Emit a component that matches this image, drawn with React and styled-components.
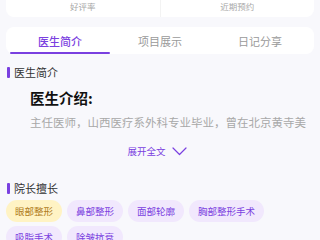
import React from 'react';
import styled, { createGlobalStyle } from 'styled-components';

const GlobalStyle = createGlobalStyle`
  html, body {
    margin: 0;
    padding: 0;
    background: #f8f8fc;
    font-family: "Noto Sans CJK SC", "Noto Sans", sans-serif;
  }
`;

const Page = styled.div`
  width: 320px;
  height: 240px;
  overflow: hidden;
  padding: 0 6px;
  box-sizing: border-box;
  background: #f8f8fc;
`;

const StatsCard = styled.div`
  display: flex;
  height: 17px;
  background: #fff;
  border-radius: 0 0 8px 8px;
`;

const StatItem = styled.div`
  flex: 1;
  display: flex;
  justify-content: center;
  align-items: flex-start;
  padding-top: 1px;
  font-size: 8.5px;
  line-height: 10px;
  color: #a8a8a8;
  & + & {
    border-left: 1px solid #f3f3f3;
  }
`;

const TabsCard = styled.div`
  display: flex;
  height: 27px;
  margin-top: 10px;
  padding: 0 4px;
  background: #fff;
  border-radius: 8px;
`;

const Tab = styled.div`
  position: relative;
  flex: 1;
  display: flex;
  justify-content: center;
  align-items: center;
  padding-top: 1px;
  font-size: 11px;
  font-weight: ${({ active }) => (active ? 500 : 400)};
  color: ${({ active }) => (active ? '#7a40e0' : '#9a9a9a')};
  &::after {
    content: '';
    display: ${({ active }) => (active ? 'block' : 'none')};
    position: absolute;
    left: 0;
    right: 0;
    bottom: 0;
    height: 2px;
    border-radius: 1px;
    background: #7a40e0;
  }
`;

const SectionTitle = styled.div`
  display: flex;
  align-items: center;
  gap: 4px;
  margin-top: ${({ top }) => top}px;
  margin-left: 1px;
  font-size: 11px;
  line-height: 16px;
  color: #333;
  &::before {
    content: '';
    width: 3px;
    height: 11px;
    border-radius: 1px;
    background: #7a40e0;
  }
`;

const Intro = styled.div`
  padding-left: 24px;
  margin-top: 8px;
`;

const IntroHeading = styled.div`
  font-size: 14.5px;
  font-weight: 700;
  line-height: 20px;
  color: #111;
`;

const IntroText = styled.div`
  margin-top: 5px;
  width: 276px;
  height: 18px;
  overflow: hidden;
  white-space: nowrap;
  font-size: 11.5px;
  line-height: 18px;
  color: #a8a8a8;
`;

const ExpandButton = styled.div`
  display: flex;
  justify-content: center;
  align-items: center;
  gap: 6px;
  margin-top: 13px;
  padding-right: 6px;
  font-size: 9.5px;
  line-height: 14px;
  color: #7a40e0;
  & svg {
    width: 15px;
    height: 9px;
  }
`;

const TagList = styled.div`
  display: flex;
  flex-wrap: wrap;
  gap: 4px 5px;
  margin-top: 4px;
`;

const Tag = styled.div`
  display: flex;
  align-items: center;
  height: 22px;
  padding: 0 9px;
  border-radius: 11px;
  font-size: 9.5px;
  color: ${({ hot }) => (hot ? '#b07c20' : '#7a40e0')};
  background: ${({ hot }) => (hot ? '#fff3c4' : '#f1e8fd')};
`;

const tags = ['眼部整形', '鼻部整形', '面部轮廓', '胸部整形手术', '吸脂手术', '除皱抗衰'];

const App = () => {
  return (
    <Page>
      <GlobalStyle />
      <StatsCard>
        <StatItem>好评率</StatItem>
        <StatItem>近期预约</StatItem>
      </StatsCard>
      <TabsCard>
        <Tab active>医生简介</Tab>
        <Tab>项目展示</Tab>
        <Tab>日记分享</Tab>
      </TabsCard>
      <SectionTitle top={10}>医生简介</SectionTitle>
      <Intro>
        <IntroHeading>医生介绍:</IntroHeading>
        <IntroText>主任医师，山西医疗系外科专业毕业，曾在北京黄寺美容外科医院进修</IntroText>
      </Intro>
      <ExpandButton>
        展开全文
        <svg viewBox="0 0 15 9" fill="none" stroke="currentColor" strokeWidth="1.2" strokeLinecap="round" strokeLinejoin="round">
          <path d="M1 1l6.5 6.5L14 1" />
        </svg>
      </ExpandButton>
      <SectionTitle top={22}>院长擅长</SectionTitle>
      <TagList>
        {tags.map((t, i) => (
          <Tag key={t} hot={i === 0}>{t}</Tag>
        ))}
      </TagList>
    </Page>
  );
};

export default App;
